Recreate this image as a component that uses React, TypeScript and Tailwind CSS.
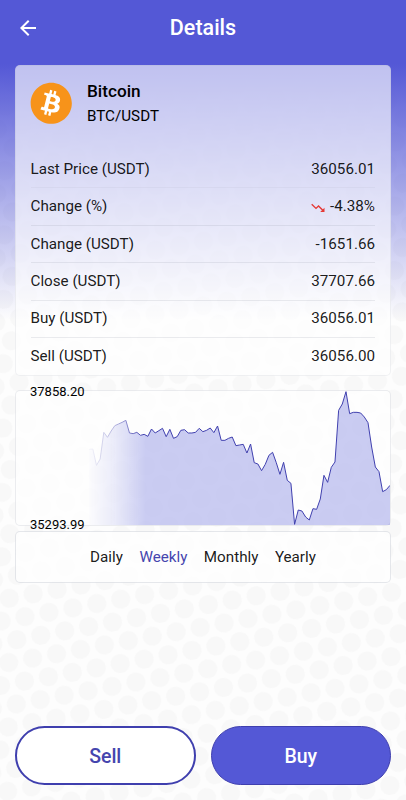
import { FaBitcoin } from "react-icons/fa";
import { MdArrowBack } from "react-icons/md";

type Row = {
  label: string;
  value: string;
  down?: boolean;
};

const rows: Row[] = [
  { label: "Last Price (USDT)", value: "36056.01" },
  { label: "Change (%)", value: "-4.38%", down: true },
  { label: "Change (USDT)", value: "-1651.66" },
  { label: "Close (USDT)", value: "37707.66" },
  { label: "Buy (USDT)", value: "36056.01" },
  { label: "Sell (USDT)", value: "36056.00" },
];

const ranges = ["Daily", "Weekly", "Monthly", "Yearly"];

// distance below the top of the chart, 0 = high, 402 = low
const points = [
  175, 174, 223, 204, 124, 139, 120, 104, 99, 94, 88, 126, 128, 124, 133, 130,
  136, 114, 126, 119, 112, 137, 115, 142, 137, 118, 116, 126, 126, 124, 112,
  122, 118, 111, 125, 105, 148, 148, 142, 138, 164, 162, 160, 186, 159, 215,
  219, 239, 220, 193, 184, 215, 250, 214, 268, 277, 400, 357, 360, 378, 387,
  353, 355, 324, 253, 274, 229, 213, 58, 39, 2, 68, 64, 64, 66, 78, 95, 168,
  228, 242, 302, 296, 283,
];

const START = 220;
const END = 1125;

function Chart() {
  const step = (END - START) / (points.length - 1);
  const line = points.map((y, i) => `${(START + i * step).toFixed(1)},${y}`).join(" ");

  return (
    <svg viewBox="0 0 1125 402" preserveAspectRatio="none" className="block h-full w-full">
      <defs>
        <linearGradient id="fade" gradientUnits="userSpaceOnUse" x1="210" y1="0" x2="390" y2="0">
          <stop offset="0" stopColor="#fff" stopOpacity="0" />
          <stop offset="0.5" stopColor="#fff" stopOpacity="0.4" />
          <stop offset="1" stopColor="#fff" />
        </linearGradient>
        <mask id="fadeMask" maskUnits="userSpaceOnUse" x="0" y="-5" width="1130" height="412">
          <rect x="0" y="-5" width="1130" height="412" fill="url(#fade)" />
        </mask>
      </defs>
      <g mask="url(#fadeMask)">
        <polygon points={`${START},402 ${line} ${END},402`} fill="#5458d6" fillOpacity="0.3" />
        <polyline points={line} fill="none" stroke="#3f3fae" strokeWidth="3" />
      </g>
    </svg>
  );
}

function DownIcon() {
  return (
    <svg width="14" height="10" viewBox="0 0 14 10" className="mt-[2px]">
      <path d="M0.7 1.2 5 5.4 7.5 3 11.8 7.2" fill="none" stroke="#e53935" strokeWidth="1.4" />
      <path d="M13.5 4.8V9H9.2Z" fill="#e53935" />
    </svg>
  );
}

function Backdrop() {
  return (
    <svg className="absolute inset-0 -z-10 h-full w-full">
      <defs>
        <pattern
          id="dots"
          width="24.33"
          height="42.14"
          patternUnits="userSpaceOnUse"
          patternTransform="translate(25 616.7) rotate(-10.4)"
        >
          <g fill="#f8f8f8">
            <circle cx="0" cy="0" r="9.6" />
            <circle cx="24.33" cy="0" r="9.6" />
            <circle cx="0" cy="42.14" r="9.6" />
            <circle cx="24.33" cy="42.14" r="9.6" />
            <circle cx="12.165" cy="21.07" r="9.6" />
          </g>
        </pattern>
        <linearGradient id="sky" x1="0" y1="0" x2="0" y2="1">
          <stop offset="0" stopColor="#5458d6" />
          <stop offset="0.2" stopColor="#5458d6" />
          <stop offset="1" stopColor="#5458d6" stopOpacity="0" />
        </linearGradient>
      </defs>
      <rect width="100%" height="100%" fill="#fdfdfd" />
      <rect width="100%" height="100%" fill="url(#dots)" />
      <rect width="100%" height="320" fill="url(#sky)" />
    </svg>
  );
}

export default function App() {
  return (
    <main className="relative isolate flex h-[800px] w-[406px] flex-col overflow-hidden px-[15px] pb-[15px] font-['Roboto','Noto_Sans',sans-serif] text-black">
      <Backdrop />

      <header className="grid h-[55px] grid-cols-[1fr_auto_1fr] items-center text-white">
        <button aria-label="Back" className="ml-[0.5px] w-fit">
          <MdArrowBack size={24} />
        </button>
        <h1 className="text-[21.5px] leading-none font-medium">Details</h1>
      </header>

      <section className="mt-[10px] h-[311px] rounded-[5px] border border-gray-400/15 bg-white/63 pr-[15px] pl-[14.5px]">
        <div className="flex h-[85px] items-start gap-[14.5px] pt-4">
          <div className="-ml-[0.5px] rounded-full bg-[radial-gradient(white_60%,transparent_61%)]">
            <FaBitcoin size={42.5} color="#f7931a" />
          </div>
          <div>
            <h2 className="text-[17.2px] leading-[19px] font-medium">Bitcoin</h2>
            <p className="mt-[6px] text-[15.2px] leading-[19px]">BTC/USDT</p>
          </div>
        </div>
        <ul>
          {rows.map((r) => (
            <li
              key={r.label}
              className="flex h-[37.4px] items-center justify-between border-b border-gray-400/20 text-[15.2px] text-black/90 first:border-gray-400/10 last:border-0"
            >
              <span>{r.label}</span>
              <span className="flex items-center gap-[5px]">
                {r.down && <DownIcon />}
                {r.value}
              </span>
            </li>
          ))}
        </ul>
      </section>

      <section className="relative mt-[14px] h-[136px] rounded-[5px] border border-gray-400/20 bg-white/63">
        <Chart />
        <span className="absolute -top-[7px] left-[14px] text-[13px] leading-4">37858.20</span>
        <span className="absolute -bottom-[8px] left-[14px] text-[13px] leading-4">35293.99</span>
      </section>

      <nav className="mt-[5px] flex h-[52px] items-center justify-center gap-[16.5px] rounded-[5px] border border-gray-400/25 bg-white/63 pt-px text-[15.2px] text-black/90">
        {ranges.map((r) => (
          <button key={r} className={r === "Weekly" ? "text-[#4545ae]" : ""}>
            {r}
          </button>
        ))}
      </nav>

      <footer className="mt-auto grid grid-cols-2 gap-[15px] text-[19.5px] font-medium">
        <button className="h-[59px] rounded-full border-2 border-[#3f3fae] bg-white pt-[2px] text-[#4545ae]">Sell</button>
        <button className="h-[59px] rounded-full border border-[#3f3fae] bg-[#5458d6] pt-[2px] text-white">Buy</button>
      </footer>
    </main>
  );
}
